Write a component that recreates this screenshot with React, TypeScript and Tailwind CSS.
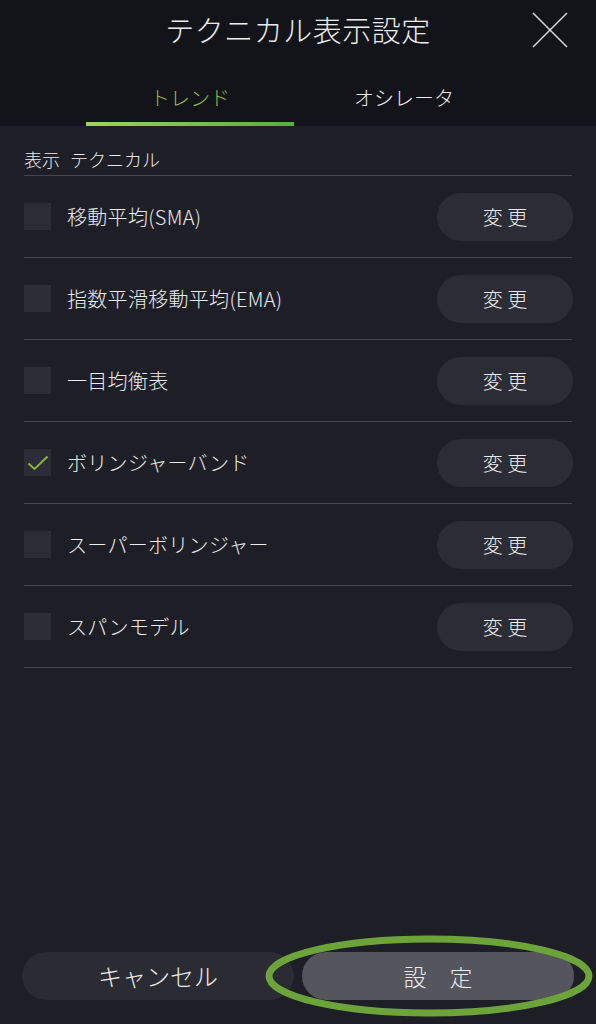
const items = [
  { name: "移動平均(SMA)", on: false },
  { name: "指数平滑移動平均(EMA)", on: false },
  { name: "一目均衡表", on: false },
  { name: "ボリンジャーバンド", on: true },
  { name: "スーパーボリンジャー", on: false },
  { name: "スパンモデル", on: false },
];

const font = { fontFamily: '"Noto Sans CJK JP", "Noto Sans", sans-serif' };

export default function App() {
  return (
    <div className="relative w-[596px] h-[1024px] flex flex-col bg-[#1e1f26] text-[#ececec] font-light" style={font}>
      {/* header */}
      <div className="h-[126px] bg-[#131419] flex flex-col">
        <div className="relative h-[58px] flex items-center justify-center">
          <h1 className="text-[29px] font-light leading-none tracking-[0.5px]">テクニカル表示設定</h1>
          <svg className="absolute left-[532px] top-[12px]" width="36" height="36" viewBox="0 0 36 36">
            <path d="M1 1 L35 35 M35 1 L1 35" stroke="#d8d8d8" strokeWidth="1.5" />
          </svg>
        </div>
        <div className="flex pl-[86px] mt-[30px]">
          <div className="w-[212px] flex flex-col items-center">
            <span className="text-[20px] leading-none text-[#8fbf3f] pr-[4px] h-[24px]">トレンド</span>
            <div className="mt-[10px] self-start w-[208px] h-[4px] bg-gradient-to-r from-[#9fd45c] to-[#58ad3a]" />
          </div>
          <div className="w-[212px] flex justify-center">
            <span className="text-[20px] leading-none h-[24px]">オシレータ</span>
          </div>
        </div>
      </div>

      {/* list */}
      <div className="px-[24px] flex-1">
        <div className="h-[50px] flex items-end pb-[7px] border-b border-[#44454d] text-[18px] leading-none">
          <span>表示</span>
          <span className="ml-[10px]">テクニカル</span>
        </div>
        {items.map((it) => (
          <div key={it.name} className="h-[82px] flex items-center border-b border-[#44454d]">
            <div className="w-[27px] h-[27px] bg-[#2b2c36] flex items-center justify-center">
              {it.on && (
                <svg width="22" height="16" viewBox="0 0 22 16">
                  <path d="M1.5 8.5 L7.5 14 L20.5 1.5" fill="none" stroke="#8db33f" strokeWidth="2" />
                </svg>
              )}
            </div>
            <span className="ml-[16px] text-[20px] leading-none flex-1 tracking-[0.3px]">{it.name}</span>
            <button className="w-[136px] h-[48px] mr-[-1px] rounded-full bg-[#2b2c36] text-[20px] font-light text-[#ececec]">
              変&nbsp;更
            </button>
          </div>
        ))}
      </div>

      {/* footer */}
      <div className="flex gap-[8px] px-[22px] pb-[24px]">
        <button className="w-[272px] h-[48px] rounded-full bg-[#2a2b33] text-[24px] font-light text-[#ececec]">キャンセル</button>
        <button className="flex-1 h-[48px] rounded-full bg-[#54555d] text-[23px] font-light text-[#ececec]">設　定</button>
      </div>

      {/* highlight ring */}
      <svg className="absolute left-[264px] top-[934px]" width="330" height="84" viewBox="0 0 330 84">
        <ellipse cx="165" cy="42" rx="160" ry="37" fill="none" stroke="#6da43a" strokeWidth="7" />
      </svg>
    </div>
  );
}
